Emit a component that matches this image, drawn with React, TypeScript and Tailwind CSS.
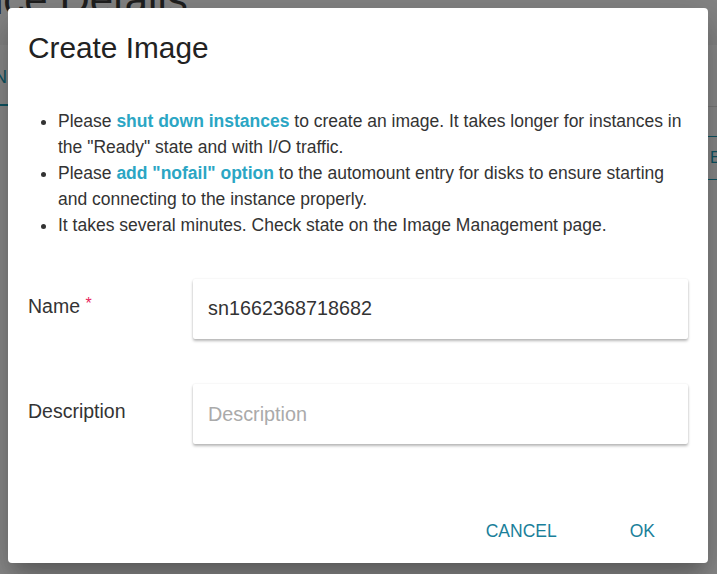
import React from "react";

export default function App() {
  const font = { fontFamily: "'Liberation Sans', Arial, sans-serif" };
  return (
    <div className="relative w-[717px] h-[574px] overflow-hidden bg-[#8b8b8b]" style={font}>
      {/* page behind the overlay (already dimmed) */}
      <div className="flex flex-col w-full h-full">
        <div className="h-[45px] bg-[#858585] overflow-hidden flex items-end">
          <div className="ml-[-20px] mb-[24px] text-[42px] leading-none text-[#1f1f1f] whitespace-nowrap">nce Details</div>
        </div>
        <div className="flex justify-between">
          <div className="flex flex-col w-[8px] overflow-hidden">
            <div className="h-[23px]" />
            <div className="text-[18px] leading-[18px] text-[#0e5564] ml-[-6px]">N</div>
            <div className="h-[18px]" />
            <div className="h-[2px] bg-[#0e5564]" />
          </div>
          <div className="flex flex-col w-[9px] overflow-hidden">
            <div className="h-[61px]" />
            <div className="h-px bg-[#7a7a7a]" />
            <div className="h-[29px]" />
            <div className="h-px bg-[#0e5564]" />
            <div className="h-[14px]" />
            <div className="text-[16px] leading-[14px] text-[#0e5564] ml-[2px]">E</div>
            <div className="h-[14px]" />
            <div className="h-px bg-[#0e5564]" />
          </div>
        </div>
      </div>

      {/* dialog overlay */}
      <div className="absolute left-[8px] top-[8px] w-[700px] h-[555px] bg-white rounded-[4px] shadow-[0_11px_15px_-7px_rgba(0,0,0,0.2),0_24px_38px_3px_rgba(0,0,0,0.14),0_9px_46px_8px_rgba(0,0,0,0.12)] flex flex-col">
        <div className="pl-[20px] pt-[24px] text-[29.8px] leading-[32px] text-[#222]">Create Image</div>
        <ul className="mt-[44px] ml-[30px] mr-[16px] list-disc pl-[20px] text-[17.5px] leading-[26px] text-[#333]">
          <li>
            Please <span className="font-bold text-[#2ba6c4]">shut down instances</span> to create an image. It takes longer for instances in the "Ready" state and with I/O traffic.
          </li>
          <li>
            Please <span className="font-bold text-[#2ba6c4]">add "nofail" option</span> to the automount entry for disks to ensure starting and connecting to the instance properly.
          </li>
          <li>It takes several minutes. Check state on the Image Management page.</li>
        </ul>

        <div className="mt-[41px] ml-[20px] mr-[20px] flex flex-col gap-[45px]">
          <div className="flex items-start">
            <div className="w-[165px] pt-[15px] text-[19.5px] leading-[24px] text-[#333]">
              Name <span className="text-[#e8245c] text-[16px] relative top-[-4px]">*</span>
            </div>
            <div className="flex-1 h-[60px] rounded-[2px] bg-white shadow-[0_2px_3px_rgba(0,0,0,0.28),0_0_2px_rgba(0,0,0,0.08)] flex items-center px-[15px] text-[19.8px] text-[#333]">
              sn1662368718682
            </div>
          </div>
          <div className="flex items-start">
            <div className="w-[165px] pt-[15px] text-[19.5px] leading-[24px] text-[#333]">Description</div>
            <div className="flex-1 h-[60px] rounded-[2px] bg-white shadow-[0_2px_3px_rgba(0,0,0,0.28),0_0_2px_rgba(0,0,0,0.08)] flex items-center px-[15px] pt-[2px] text-[19.8px] text-[#aaa]">
              Description
            </div>
          </div>
        </div>

        <div className="mt-auto mb-[20px] mr-[53px] flex justify-end items-center gap-[73px] text-[17.5px] leading-[24px] text-[#1a7f9a]">
          <span>CANCEL</span>
          <span>OK</span>
        </div>
      </div>
    </div>
  );
}
